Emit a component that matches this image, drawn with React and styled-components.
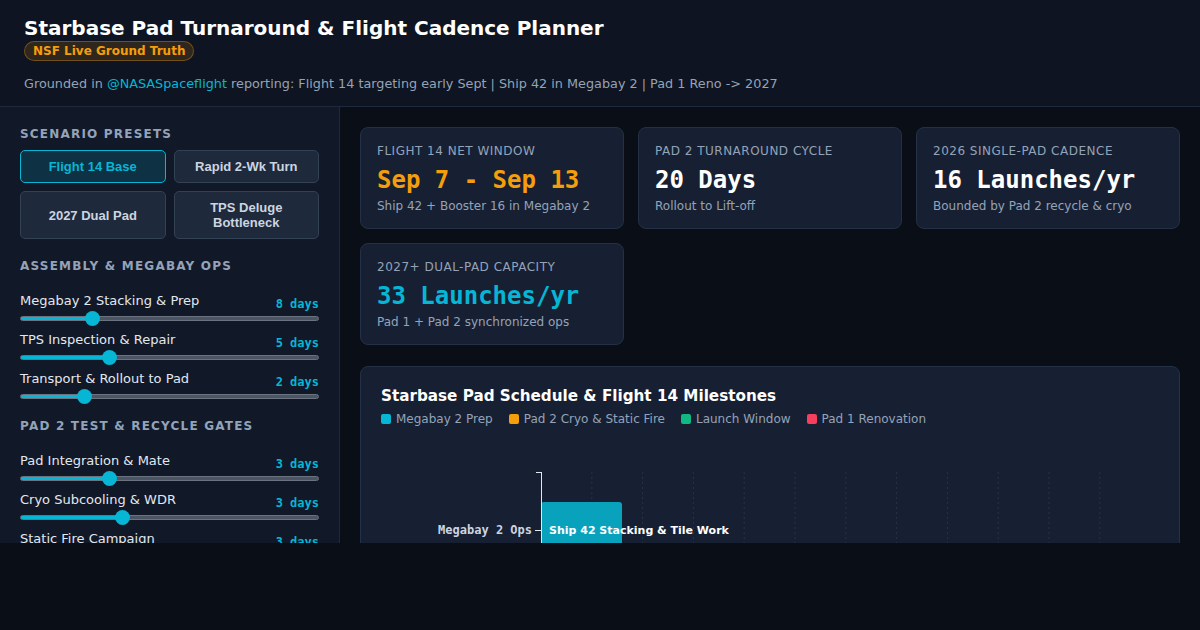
import styled, { createGlobalStyle } from "styled-components";
import { useState } from "react";

const GlobalStyle = createGlobalStyle`
    html, body {
        margin : 0;
        padding : 0;
        background : #0a0e16;
        font-family : "DejaVu Sans", "Noto Sans", sans-serif;
        color : #e2e8f0;
    }
    * { box-sizing : border-box; }
`;

const presets = [
    { id : "base", label : "Flight 14 Base" },
    { id : "rapid", label : "Rapid 2-Wk Turn" },
    { id : "dual", label : "2027 Dual Pad" },
    { id : "tps", label : "TPS Deluge Bottleneck" },
];

const assembly = [
    { label : "Megabay 2 Stacking & Prep", value : 8, min : 0, max : 35 },
    { label : "TPS Inspection & Repair", value : 5, min : 1, max : 15 },
    { label : "Transport & Rollout to Pad", value : 2, min : 1, max : 6 },
];

const padGates = [
    { label : "Pad Integration & Mate", value : 3, min : 1, max : 8 },
    { label : "Cryo Subcooling & WDR", value : 3, min : 1, max : 7 },
    { label : "Static Fire Campaign", value : 3, min : 1, max : 10 },
];

const metrics = [
    { label : "Flight 14 NET Window", value : "Sep 7 - Sep 13", sub : "Ship 42 + Booster 16 in Megabay 2", tone : "#f59e0b" },
    { label : "Pad 2 Turnaround Cycle", value : "20 Days", sub : "Rollout to Lift-off", tone : "#ffffff" },
    { label : "2026 Single-Pad Cadence", value : "16 Launches/yr", sub : "Bounded by Pad 2 recycle & cryo", tone : "#ffffff" },
    { label : "2027+ Dual-Pad Capacity", value : "33 Launches/yr", sub : "Pad 1 + Pad 2 synchronized ops", tone : "#06b6d4" },
];

const legend = [
    { label : "Megabay 2 Prep", color : "#06b6d4" },
    { label : "Pad 2 Cryo & Static Fire", color : "#f59e0b" },
    { label : "Launch Window", color : "#10b981" },
    { label : "Pad 1 Renovation", color : "#f43f5e" },
];

const SliderControl = ({ item, onChange }) => {
    const pct = ((item.value - item.min) / (item.max - item.min)) * 100;
    return <SliderRow>
        <SliderHead>
            <SliderLabel>{item.label}</SliderLabel>
            <SliderValue>{item.value} days</SliderValue>
        </SliderHead>
        <Range
            type="range"
            min={item.min}
            max={item.max}
            value={item.value}
            $pct={pct}
            onChange={e => onChange(Number(e.target.value))}
        />
    </SliderRow>
}

const ScheduleChart = () => {
    const axisX = 160;
    const step = 50.8;
    const grid = Array.from({ length : 11 }, (_, i) => axisX + step * (i + 1));
    return <svg width="100%" height="120" style={{ display : "block" }}>
        {grid.map(x => (
            <line key={x} x1={x} x2={x} y1={27} y2={200} stroke="#263348" strokeDasharray="2 3" />
        ))}
        <rect x={axisX} y={57} width={81} height={120} rx={3} fill="#09a2bd" />
        <line x1={axisX - 5} x2={axisX} y1={27.5} y2={27.5} stroke="#e2e8f0" />
        <line x1={axisX + 0.5} x2={axisX + 0.5} y1={27} y2={200} stroke="#e2e8f0" />
        <line x1={axisX - 6} x2={axisX} y1={85.5} y2={85.5} stroke="#e2e8f0" />
        <text x={axisX - 9} y={89} textAnchor="end" fill="#cbd5e1" fontFamily="'DejaVu Sans Mono', monospace" fontSize="12" fontWeight="bold">Megabay 2 Ops</text>
        <text x={axisX + 8} y={89} fill="#ffffff" fontFamily="'DejaVu Sans', sans-serif" fontSize="11" fontWeight="bold">Ship 42 Stacking &amp; Tile Work</text>
    </svg>
}

const App = () => {
    const [ preset , setPreset ] = useState("base");
    const [ assemblyOps , setAssemblyOps ] = useState(assembly);
    const [ gateOps , setGateOps ] = useState(padGates);

    const update = (list, setList, idx) => (v) => {
        setList(list.map((it, i) => i === idx ? { ...it, value : v } : it));
    }

    return <>
        <GlobalStyle />
        <Page>
            <Header>
                <Title>Starbase Pad Turnaround &amp; Flight Cadence Planner</Title>
                <Badge>NSF Live Ground Truth</Badge>
                <Subtitle>
                    Grounded in <Handle>@NASASpaceflight</Handle> reporting: Flight 14 targeting early Sept | Ship 42 in Megabay 2 | Pad 1 Reno -&gt; 2027
                </Subtitle>
            </Header>
            <Body>
                <Sidebar>
                    <SectionTitle>Scenario Presets</SectionTitle>
                    <PresetGrid>
                        {presets.map(p => (
                            <PresetButton key={p.id} $active={preset === p.id} onClick={() => setPreset(p.id)}>
                                {p.label}
                            </PresetButton>
                        ))}
                    </PresetGrid>

                    <SectionTitle $mt={20}>Assembly &amp; Megabay Ops</SectionTitle>
                    <SliderList>
                        {assemblyOps.map((it, i) => (
                            <SliderControl key={it.label} item={it} onChange={update(assemblyOps, setAssemblyOps, i)} />
                        ))}
                    </SliderList>

                    <SectionTitle $mt={15}>Pad 2 Test &amp; Recycle Gates</SectionTitle>
                    <SliderList>
                        {gateOps.map((it, i) => (
                            <SliderControl key={it.label} item={it} onChange={update(gateOps, setGateOps, i)} />
                        ))}
                    </SliderList>
                </Sidebar>

                <Main>
                    <MetricGrid>
                        {metrics.map(m => (
                            <MetricCard key={m.label}>
                                <MetricLabel>{m.label}</MetricLabel>
                                <MetricValue $tone={m.tone}>{m.value}</MetricValue>
                                <MetricSub>{m.sub}</MetricSub>
                            </MetricCard>
                        ))}
                    </MetricGrid>

                    <ChartPanel>
                        <ChartTitle>Starbase Pad Schedule &amp; Flight 14 Milestones</ChartTitle>
                        <Legend>
                            {legend.map(l => (
                                <LegendItem key={l.label}>
                                    <Swatch $color={l.color} />
                                    {l.label}
                                </LegendItem>
                            ))}
                        </Legend>
                        <ChartArea>
                            <ScheduleChart />
                        </ChartArea>
                    </ChartPanel>
                </Main>
            </Body>
        </Page>
    </>
}

export default App;

const Page = styled.div`
    height : 543px;
    overflow : hidden;
    display : flex;
    flex-direction : column;
    background : #0a0e16;
`;

const Header = styled.header`
    padding : 16px 24px 13px;
    background : #0e1421;
    border-bottom : 1px solid #1e293b;
`;

const Title = styled.h1`
    margin : 0;
    font-size : 20px;
    line-height : 24px;
    font-weight : bold;
    color : #ffffff;
`;

const Badge = styled.span`
    display : inline-block;
    margin-top : 1px;
    padding : 2px 8px;
    font-size : 12px;
    line-height : 14px;
    font-weight : bold;
    color : #f59e0b;
    background : rgba(245, 158, 11, 0.14);
    border : 1px solid rgba(245, 158, 11, 0.35);
    border-radius : 10px;
`;

const Subtitle = styled.p`
    margin : 14px 0 0;
    font-size : 12.8px;
    line-height : 18px;
    color : #94a3b8;
`;

const Handle = styled.span`
    color : #06b6d4;
`;

const Body = styled.div`
    flex : 1;
    min-height : 0;
    display : flex;
`;

const Sidebar = styled.aside`
    width : 340px;
    flex-shrink : 0;
    padding : 20px;
    background : #111827;
    border-right : 1px solid #1e293b;
`;

const SectionTitle = styled.h3`
    margin : ${p => p.$mt || 0}px 0 0;
    font-size : 12px;
    line-height : 14px;
    font-weight : bold;
    letter-spacing : 1.2px;
    text-transform : uppercase;
    color : #94a3b8;
`;

const PresetGrid = styled.div`
    display : grid;
    grid-template-columns : 1fr 1fr;
    gap : 8px;
    margin-top : 9px;
`;

const PresetButton = styled.button`
    padding : 8px;
    font-family : "Liberation Sans", Arial, sans-serif;
    font-size : 13px;
    line-height : 15px;
    font-weight : bold;
    border-radius : 5px;
    cursor : pointer;
    color : ${p => p.$active ? "#06b6d4" : "#cbd5e1"};
    background : ${p => p.$active ? "#0e3144" : "#1e293b"};
    border : 1px solid ${p => p.$active ? "#06b6d4" : "#334155"};
`;

const SliderList = styled.div`
    display : flex;
    flex-direction : column;
    gap : 5px;
    margin-top : 19px;
`;

const SliderRow = styled.div``;

const SliderHead = styled.div`
    display : flex;
    justify-content : space-between;
    align-items : flex-start;
    height : 18px;
`;

const SliderLabel = styled.span`
    font-size : 13px;
    line-height : 18px;
    color : #e2e8f0;
`;

const SliderValue = styled.span`
    font-family : "DejaVu Sans Mono", monospace;
    font-size : 12px;
    line-height : 18px;
    font-weight : bold;
    color : #06b6d4;
    transform : translateY(3px);
`;

const Range = styled.input`
    display : block;
    appearance : none;
    -webkit-appearance : none;
    width : 100%;
    height : 16px;
    margin : 0;
    background : transparent;
    cursor : pointer;

    &::-webkit-slider-runnable-track {
        height : 5px;
        border-radius : 3px;
        border : 1px solid #6b7280;
        background : linear-gradient(to right, #06b6d4 ${p => p.$pct}%, #4b5563 ${p => p.$pct}%);
    }

    &::-webkit-slider-thumb {
        -webkit-appearance : none;
        width : 15px;
        height : 15px;
        margin-top : -6px;
        border-radius : 50%;
        background : #06b6d4;
        border : none;
    }
`;

const Main = styled.main`
    flex : 1;
    min-width : 0;
    padding : 20px;
`;

const MetricGrid = styled.div`
    display : grid;
    grid-template-columns : repeat(3, 1fr);
    gap : 14px;
`;

const MetricCard = styled.div`
    padding : 16px 16px 14px;
    background : #172033;
    border : 1px solid #243046;
    border-radius : 8px;
`;

const MetricLabel = styled.div`
    font-size : 12px;
    line-height : 14px;
    letter-spacing : 0.5px;
    text-transform : uppercase;
    color : #94a3b8;
`;

const MetricValue = styled.div`
    margin-top : 8px;
    font-family : "DejaVu Sans Mono", monospace;
    font-size : 24px;
    line-height : 28px;
    font-weight : bold;
    color : ${p => p.$tone};
`;

const MetricSub = styled.div`
    margin-top : 4px;
    font-size : 12px;
    line-height : 16px;
    color : #94a3b8;
`;

const ChartPanel = styled.section`
    margin-top : 21px;
    padding : 20px;
    background : #172033;
    border : 1px solid #243046;
    border-radius : 8px;
`;

const ChartTitle = styled.h2`
    margin : 0;
    font-size : 15.2px;
    line-height : 18px;
    font-weight : bold;
    color : #ffffff;
`;

const Legend = styled.div`
    display : flex;
    gap : 16px;
    margin-top : 6px;
`;

const LegendItem = styled.div`
    display : flex;
    align-items : center;
    font-size : 12px;
    line-height : 16px;
    color : #94a3b8;
`;

const Swatch = styled.span`
    width : 10px;
    height : 10px;
    margin-right : 5px;
    border-radius : 2px;
    background : ${p => p.$color};
`;

const ChartArea = styled.div`
    margin-top : 18px;
`;
